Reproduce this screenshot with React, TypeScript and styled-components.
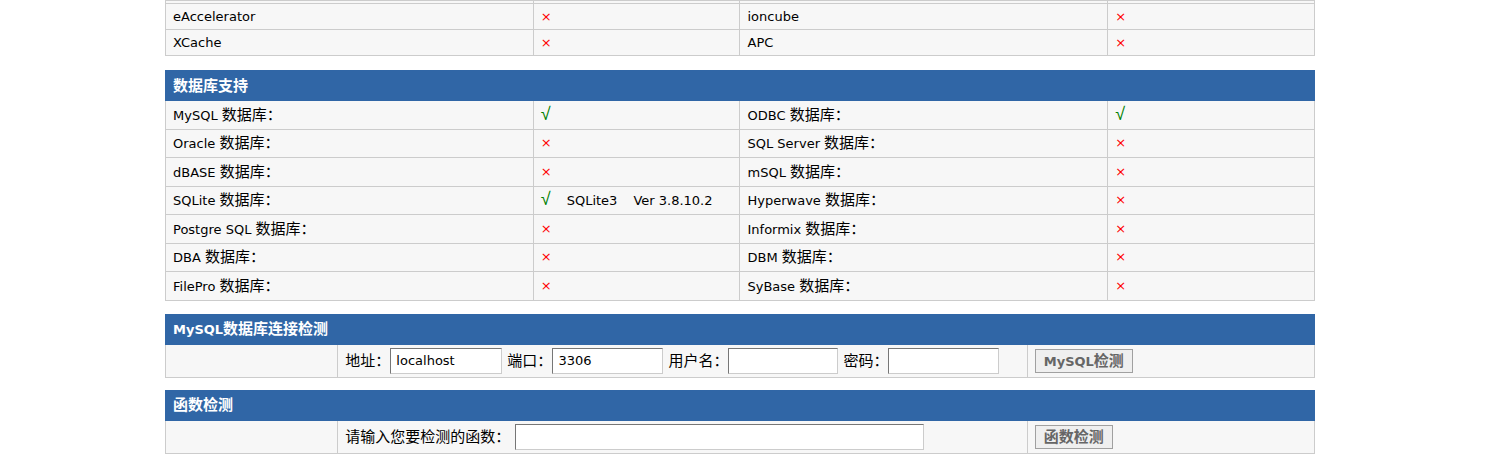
import React from "react";
import styled, { createGlobalStyle } from "styled-components";

const GlobalStyle = createGlobalStyle`
  html, body { margin: 0; padding: 0; background: #ffffff; }
  body {
    font-family: "DejaVu Sans", "Noto Sans CJK SC", sans-serif;
    font-size: 13px;
    color: #000;
  }
`;

const Page = styled.div`
  width: 1150px;
  padding-left: 165px;
`;

const Table = styled.table<{ $gap?: number }>`
  width: 1150px;
  border-collapse: collapse;
  border-spacing: 0;
  table-layout: fixed;
  margin: 0 0 ${(p) => p.$gap ?? 14}px;
`;

const HeadCell = styled.th`
  height: 29px;
  padding: 0 7px;
  background: #3066a6;
  border: 1px solid #3066a6;
  color: #ffffff;
  font-weight: bold;
  font-size: 13px;
  text-align: left;
  line-height: 20px;
`;

const Row = styled.tr<{ $h: number }>`
  background: #f7f7f7;
  height: ${(p) => p.$h}px;
`;

const Cell = styled.td`
  padding: 0 7px;
  border: 1px solid #cccccc;
  white-space: nowrap;
  vertical-align: middle;
  line-height: 20px;
`;

/* CJK runs are drawn a little larger than the Latin text, as in the original */
const Han = styled.span`
  font-family: "Noto Sans CJK SC", sans-serif;
  font-size: 15px;
`;

const Mark = styled.span<{ $ok: boolean }>`
  display: inline-block;
  width: 11px;
  color: ${(p) => (p.$ok ? "#008000" : "#ff0000")};
  font-family: ${(p) => (p.$ok ? '"Liberation Sans", sans-serif' : '"DejaVu Sans", sans-serif')};
  font-size: ${(p) => (p.$ok ? "18px" : "13px")};
`;

const Extra = styled.span`
  margin-left: 15px;
  & > span + span {
    margin-left: 16px;
  }
`;

const FormLine = styled.div`
  display: flex;
  align-items: center;
  height: 32px;
`;

const Label = styled.span<{ $gap?: number }>`
  margin-right: ${(p) => p.$gap ?? 0}px;
  white-space: nowrap;
`;

const TextInput = styled.input<{ $w: number }>`
  box-sizing: border-box;
  width: ${(p) => p.$w}px;
  height: 26px;
  margin-right: 5px;
  padding: 0 5px;
  font-family: "DejaVu Sans", sans-serif;
  font-size: 13px;
  color: #000;
  background: #fff;
  border: 1px solid #cccccc;
  border-top-color: #767676;
  border-left-color: #767676;
  outline: none;
`;

const Button = styled.button`
  box-sizing: border-box;
  height: 24px;
  padding: 0 8px;
  font-family: "DejaVu Sans", "Noto Sans CJK SC", sans-serif;
  font-size: 13px;
  font-weight: bold;
  line-height: 20px;
  color: #666666;
  background: #efefef;
  border: 1px solid #a0a0a0;
  cursor: pointer;
`;

const CJK = /([\u3000-\u303f\u4e00-\u9fff\uff00-\uffef]+)/;

const T = ({ children }: { children: string }) => (
  <>
    {children.split(CJK).map((part, i) =>
      part === "" ? null : CJK.test(part) ? (
        <Han key={i}>{part}</Han>
      ) : (
        <React.Fragment key={i}>{part}</React.Fragment>
      )
    )}
  </>
);

type Pair = [string, boolean, string, boolean, string[]?];

const topRows: Pair[] = [
  ["eAccelerator", false, "ioncube", false],
  ["XCache", false, "APC", false],
];

const dbRows: Pair[] = [
  ["MySQL 数据库：", true, "ODBC 数据库：", true],
  ["Oracle 数据库：", false, "SQL Server 数据库：", false],
  ["dBASE 数据库：", false, "mSQL 数据库：", false],
  ["SQLite 数据库：", true, "Hyperwave 数据库：", false, ["SQLite3", "Ver 3.8.10.2"]],
  ["Postgre SQL 数据库：", false, "Informix 数据库：", false],
  ["DBA 数据库：", false, "DBM 数据库：", false],
  ["FilePro 数据库：", false, "SyBase 数据库：", false],
];

const Sign = ({ ok }: { ok: boolean }) => <Mark $ok={ok}>{ok ? "√" : "×"}</Mark>;

const FourCols = () => (
  <colgroup>
    <col style={{ width: "32%" }} />
    <col style={{ width: "18%" }} />
    <col style={{ width: "32%" }} />
    <col style={{ width: "18%" }} />
  </colgroup>
);

const ThreeCols = () => (
  <colgroup>
    <col style={{ width: "15%" }} />
    <col style={{ width: "60%" }} />
    <col style={{ width: "25%" }} />
  </colgroup>
);

const PairRow = ({ r, h }: { r: Pair; h: number }) => (
  <Row $h={h}>
    <Cell>
      <T>{r[0]}</T>
    </Cell>
    <Cell>
      <Sign ok={r[1]} />
      {r[4] && (
        <Extra>
          {r[4].map((s) => (
            <span key={s}>{s}</span>
          ))}
        </Extra>
      )}
    </Cell>
    <Cell>
      <T>{r[2]}</T>
    </Cell>
    <Cell>
      <Sign ok={r[3]} />
    </Cell>
  </Row>
);

export default function App() {
  return (
    <>
      <GlobalStyle />
      <Page>
        <Table>
          <FourCols />
          <tbody>
            <Row $h={3}>
              <Cell />
              <Cell />
              <Cell />
              <Cell />
            </Row>
            {topRows.map((r) => (
              <PairRow key={r[0]} r={r} h={26} />
            ))}
          </tbody>
        </Table>

        <Table $gap={13}>
          <FourCols />
          <thead>
            <tr>
              <HeadCell colSpan={4}>
                <T>数据库支持</T>
              </HeadCell>
            </tr>
          </thead>
          <tbody>
            {dbRows.map((r) => (
              <PairRow key={r[0]} r={r} h={28.5} />
            ))}
          </tbody>
        </Table>

        <Table $gap={12}>
          <ThreeCols />
          <thead>
            <tr>
              <HeadCell colSpan={3}>
                <T>MySQL数据库连接检测</T>
              </HeadCell>
            </tr>
          </thead>
          <tbody>
            <Row $h={33}>
              <Cell />
              <Cell>
                <FormLine>
                  <Label>
                    <T>地址：</T>
                  </Label>
                  <TextInput $w={112} defaultValue="localhost" />
                  <Label>
                    <T>端口：</T>
                  </Label>
                  <TextInput $w={111} defaultValue="3306" />
                  <Label>
                    <T>用户名：</T>
                  </Label>
                  <TextInput $w={110} defaultValue="" />
                  <Label>
                    <T>密码：</T>
                  </Label>
                  <TextInput $w={111} type="password" defaultValue="" />
                </FormLine>
              </Cell>
              <Cell>
                <Button type="button">
                  <T>MySQL检测</T>
                </Button>
              </Cell>
            </Row>
          </tbody>
        </Table>

        <Table>
          <ThreeCols />
          <thead>
            <tr>
              <HeadCell colSpan={3}>
                <T>函数检测</T>
              </HeadCell>
            </tr>
          </thead>
          <tbody>
            <Row $h={33}>
              <Cell />
              <Cell>
                <FormLine>
                  <Label $gap={5}>
                    <T>请输入您要检测的函数：</T>
                  </Label>
                  <TextInput $w={409} defaultValue="" />
                </FormLine>
              </Cell>
              <Cell>
                <Button type="button">
                  <T>函数检测</T>
                </Button>
              </Cell>
            </Row>
          </tbody>
        </Table>
      </Page>
    </>
  );
}
